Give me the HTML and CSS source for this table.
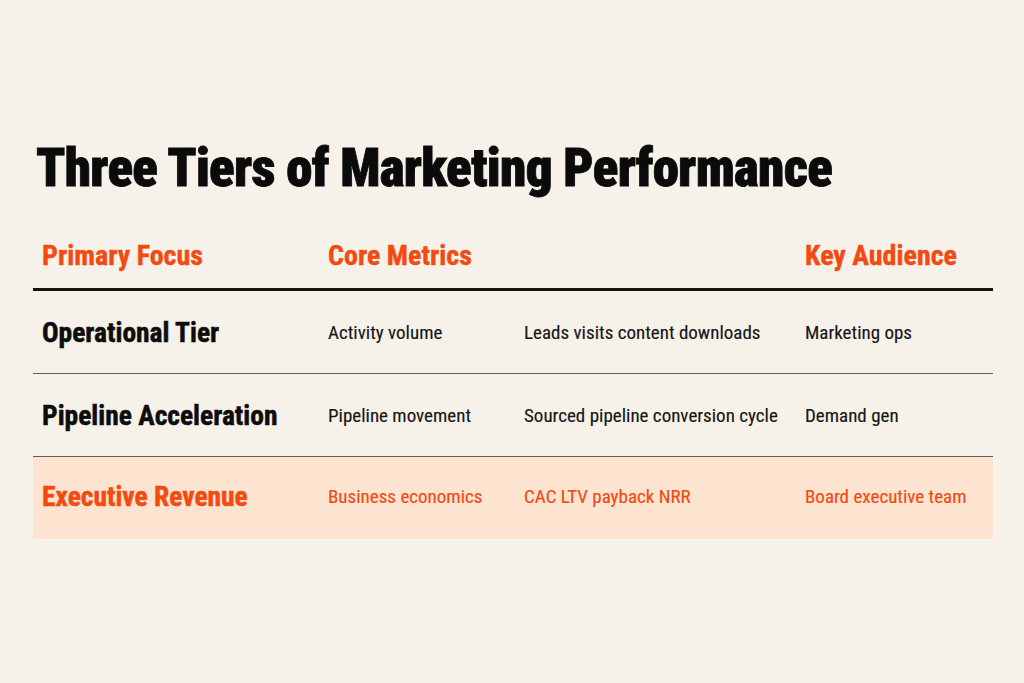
FILE: index.html
```html
<!DOCTYPE html>
<html>
<head>
<meta charset="utf-8">
<link rel="stylesheet" href="styles.css">
</head>
<body>
<main class="page">
  <h1 class="title">Three Tiers of Marketing Performance</h1>
  <div class="table">
    <div class="row head">
      <div class="cell">Primary Focus</div>
      <div class="cell">Core Metrics</div>
      <div class="cell"></div>
      <div class="cell">Key Audience</div>
    </div>
    <div class="row">
      <div class="cell name">Operational Tier</div>
      <div class="cell">Activity volume</div>
      <div class="cell">Leads visits content downloads</div>
      <div class="cell">Marketing ops</div>
    </div>
    <div class="row">
      <div class="cell name">Pipeline Acceleration</div>
      <div class="cell">Pipeline movement</div>
      <div class="cell">Sourced pipeline conversion cycle</div>
      <div class="cell">Demand gen</div>
    </div>
    <div class="row hl">
      <div class="cell name">Executive Revenue</div>
      <div class="cell">Business economics</div>
      <div class="cell">CAC LTV payback NRR</div>
      <div class="cell">Board executive team</div>
    </div>
  </div>
</main>
</body>
</html>
```
FILE: styles.css
```css
html, body {
  margin: 0;
  padding: 0;
  background: #f6f2ea;
}
body {
  width: 1024px;
  height: 683px;
  overflow: hidden;
  font-family: "Roboto Condensed", "Liberation Sans Narrow", "Liberation Sans", sans-serif;
  color: #111;
}
.page {
  padding: 136px 31px 0 33px;
}
.title {
  margin: 0 0 0 3px;
  font-size: 53px;
  font-weight: 900;
  line-height: 64px;
  letter-spacing: -0.7px;
  color: #0b0b0b;
  -webkit-text-stroke: 0.8px #0b0b0b;
}
.table {
  margin-top: 32px;
  display: flex;
  flex-direction: column;
}
.row {
  display: grid;
  grid-template-columns: 286px 196px 281px 1fr;
  align-items: center;
  height: 82px;
  border-bottom: 1px solid #5e5e5c;
  padding-left: 9px;
}
.row .cell {
  font-size: 19px;
  color: #161616;
  -webkit-text-stroke: 0.15px currentColor;
}
.row .name {
  font-size: 27.5px;
  font-weight: 700;
  color: #0d0d0d;
  letter-spacing: 0;
  -webkit-text-stroke: 0.5px currentColor;
}
.row.head {
  height: 49px;
  padding-top: 7px;
  align-items: start;
  border-bottom: 3px solid #141414;
}
.row.head .cell {
  font-size: 28px;
  font-weight: 700;
  color: #f24a10;
  -webkit-text-stroke: 0.4px currentColor;
}
.row.hl {
  background: #fce4d1;
  border-bottom: none;
}
.row.hl .cell {
  color: #f24a10;
  padding-bottom: 4px;
}
```
